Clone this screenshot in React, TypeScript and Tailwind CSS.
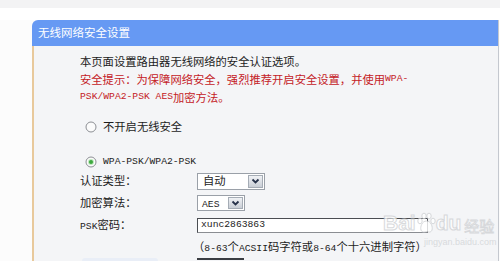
import React from 'react'

const cjk = '[font-family:"Noto_Sans_CJK_SC","Liberation_Sans",sans-serif]'

function Mono({ children }: { children: React.ReactNode }) {
  return <span className="[font-family:'Liberation_Mono',monospace] text-[9.7px] leading-none">{children}</span>
}

function Radio({ checked }: { checked?: boolean }) {
  return (
    <svg width="12" height="12" viewBox="0 0 12 12" className="shrink-0">
      <circle cx="6" cy="6" r="5" fill="#fbfbfb" stroke="#8c8f94" strokeWidth="1" />
      {checked && <circle cx="6" cy="6" r="3" fill="#bfe8bf" />}
      {checked && <circle cx="6" cy="6" r="2" fill="#3da83d" />}
    </svg>
  )
}

function DropButton() {
  return (
    <div className="w-[15px] h-full border border-[#a5acb5] bg-gradient-to-b from-[#f0f2f5] to-[#c9ced6] flex items-center justify-center">
      <svg width="9" height="7" viewBox="0 0 9 7">
        <path d="M1.5 1.5 L4.5 4.5 L7.5 1.5" fill="none" stroke="#27324a" strokeWidth="1.8" />
      </svg>
    </div>
  )
}

function Row({ label, children }: { label: React.ReactNode; children?: React.ReactNode }) {
  return (
    <div className="h-[22px] flex items-center leading-none">
      <div className="w-[117px] shrink-0">{label}</div>
      {children}
    </div>
  )
}

export default function App() {
  return (
    <div className={`relative w-[500px] h-[261px] overflow-hidden bg-[#fcfcfc] text-[11.3px] text-[#1c1c1c] ${cjk}`}>
      <div className="h-[8px] bg-[#f3f3f4]" />
      <div className="h-[12px] bg-white" />

      <div className="ml-[32px] w-[467px] border-r border-[#c4c8cf]">
        {/* header */}
        <div className="h-[26px] bg-[#6699f3] rounded-tl-[6px] pl-[6px] flex items-center text-white text-[11.5px]">
          无线网络安全设置
        </div>

        {/* body */}
        <div className="h-[260px] border-l-2 border-[#e8c99c] bg-[#f4f5f7] pl-[46px] pt-[6px]">
          <div className="flex flex-col">
            <p className="h-[18px] flex items-center">本页面设置路由器无线网络的安全认证选项。</p>
            <p className="h-[18px] flex items-center text-[#c42126]">安全提示：为保障网络安全，强烈推荐开启安全设置，并使用<Mono>WPA-</Mono></p>
            <p className="h-[18px] flex items-center text-[#c42126]"><Mono>PSK/WPA2-PSK AES</Mono>加密方法。</p>
          </div>

          <div className="mt-[12px] h-[18px] flex items-center gap-[6px] pl-[5px] leading-none">
            <Radio />
            <span>不开启无线安全</span>
          </div>

          <div className="mt-[17px] h-[17px] flex items-center gap-[6px] pl-[5px] leading-none">
            <Radio checked />
            <Mono>WPA-PSK/WPA2-PSK</Mono>
          </div>

          <Row label="认证类型：">
            <div className="w-[68px] h-[17px] border border-[#9aa0a8] bg-white flex items-center justify-between p-px">
              <span className="pl-[4px]">自动</span>
              <DropButton />
            </div>
          </Row>
          <Row label="加密算法：">
            <div className="w-[48px] h-[16px] border border-[#9aa0a8] bg-white flex items-center justify-between p-px">
              <span className="pl-[3px]"><Mono>AES</Mono></span>
              <DropButton />
            </div>
          </Row>
          <Row label={<><Mono>PSK</Mono>密码：</>}>
            <div className="w-[231px] h-[15px] border border-[#4a4d52] border-b-[#8a8d92] bg-white flex items-center pl-[3px]">
              <Mono>xunc2863863</Mono>
            </div>
          </Row>
          <Row label="">
            <span className="-ml-[4px]">（<Mono>8-63</Mono>个<Mono>ACSII</Mono>码字符或<Mono>8-64</Mono>个十六进制字符）</span>
          </Row>
          <div className="h-[22px] flex items-start">
            <div className="ml-[2px] w-[76px] h-[14px] rounded-t-[3px] bg-[#e9eef7]" />
            <div className="ml-[39px] w-[47px] h-[14px] border-t-2 border-[#3a3d42]" />
          </div>
        </div>
      </div>

      {/* Baidu watermark */}
      <div className="absolute left-[383px] top-[212px] flex items-end opacity-80 pointer-events-none">
        <span className="[font-family:'Liberation_Sans',sans-serif] text-[21px] leading-none font-bold text-white [-webkit-text-stroke:1px_#cfd1d4]">Bai</span>
        <svg width="20" height="22" viewBox="0 0 20 22" className="-mb-[1px]">
          <g fill="white" stroke="#cfd1d4" strokeWidth="1">
            <ellipse cx="4" cy="9" rx="2.2" ry="2.8" />
            <ellipse cx="8" cy="4" rx="2.2" ry="2.8" />
            <ellipse cx="13" cy="4" rx="2.2" ry="2.8" />
            <ellipse cx="17" cy="9" rx="2.2" ry="2.8" />
            <path d="M10.5 9 C6 9 4 15 5 18 C6 21 9 20 10.5 19.5 C12 20 15 21 16 18 C17 15 15 9 10.5 9 Z" />
          </g>
        </svg>
        <span className="[font-family:'Liberation_Sans',sans-serif] text-[21px] leading-none font-bold text-white [-webkit-text-stroke:1px_#cfd1d4]">du</span>
        <span className="ml-[3px] text-[15px] leading-none text-white [-webkit-text-stroke:0.8px_#cfd1d4]">经验</span>
      </div>
      <div className="absolute left-[424px] top-[238px] text-[9px] leading-none text-[#d8dadd] [font-family:'Liberation_Sans',sans-serif] pointer-events-none">
        jingyan.baidu.com
      </div>
    </div>
  )
}
